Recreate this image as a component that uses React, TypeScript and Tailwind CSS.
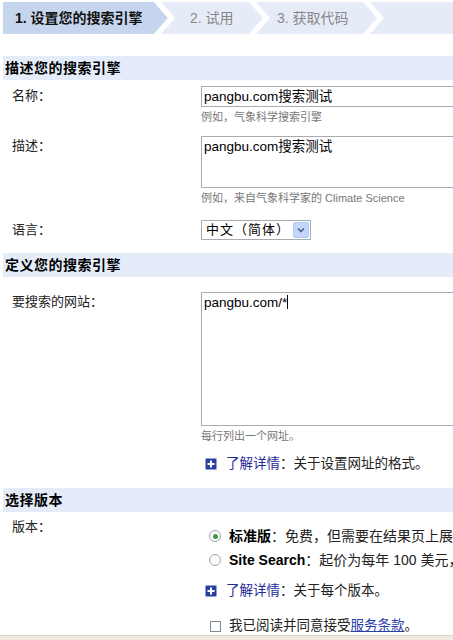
import React from 'react';

const font = { fontFamily: '"Liberation Sans", "Noto Sans CJK SC", sans-serif' };

function Chevron({ left, right }: { left: string; right: string }) {
  return (
    <svg width="26" height="32" viewBox="0 0 26 32" className="shrink-0 block">
      <rect x="0" y="0" width="26" height="32" fill={right} />
      <polygon points="0,0 4,0 18,16 4,32 0,32" fill={left} />
      <polygon points="4,0 11,0 25,16 11,32 4,32 18,16" fill="#ffffff" />
    </svg>
  );
}

function PlusIcon() {
  return (
    <svg width="12" height="12" viewBox="0 0 12 12" className="shrink-0">
      <rect x="0.5" y="0.5" width="11" height="11" rx="1" fill="#2b3f9e" stroke="#8fa2d6" />
      <rect x="2.5" y="5" width="7" height="2" fill="#ffffff" />
      <rect x="5" y="2.5" width="2" height="7" fill="#ffffff" />
    </svg>
  );
}

function Radio({ checked }: { checked?: boolean }) {
  return (
    <span className="w-[12px] h-[12px] rounded-full border border-[#9aa4ad] bg-white flex items-center justify-center shrink-0">
      {checked && <span className="w-[5px] h-[5px] rounded-full bg-[#3d9c3d]" />}
    </span>
  );
}

function SectionHeader({ title }: { title: string }) {
  return (
    <div className="ml-[3px] h-[24px] bg-[#e5ecf9] flex items-center pl-[2px]">
      <span className="text-[14px] font-bold text-black tracking-[0.5px]">{title}</span>
    </div>
  );
}

function Row({ label, labelTop = 1, children }: { label: string; labelTop?: number; children: React.ReactNode }) {
  return (
    <div className="flex">
      <div
        className={
          'w-[201px] shrink-0 pl-[12px] text-[13px] leading-[18px] text-[#222] ' +
          (labelTop === 0 ? 'pt-0' : 'pt-[1px]')
        }
      >
        {label}
      </div>
      <div className="flex-1 min-w-0">{children}</div>
    </div>
  );
}

function Hint({ text }: { text: string }) {
  return <div className="text-[11px] text-[#777] mt-[3px] leading-[14px] whitespace-nowrap">{text}</div>;
}

export default function App() {
  return (
    <div className="w-[453px] h-[640px] overflow-hidden bg-white relative flex flex-col" style={font}>
      {/* Step tabs */}
      <div className="mt-[2px] ml-[3px] h-[32px] flex bg-[#e6ecf7]">
        <div className="w-[147px] bg-[#c6d5ee] flex items-center pl-[12px] text-[14px] font-bold text-[#111]">
          1. 设置您的搜索引擎
        </div>
        <Chevron left="#c6d5ee" right="#e6ecf7" />
        <div className="w-[69px] flex items-center pl-[14px] text-[14px] text-[#888]">2. 试用</div>
        <Chevron left="#e6ecf7" right="#e6ecf7" />
        <div className="w-[88px] flex items-center pl-[6px] text-[14px] text-[#888]">3. 获取代码</div>
        <Chevron left="#e6ecf7" right="#e6ecf7" />
      </div>

      <div className="mt-[22px]">
        <SectionHeader title="描述您的搜索引擎" />
      </div>

      <div className="mt-[6px] flex flex-col">
        <Row label="名称：">
          <div className="w-[300px] h-[21px] border border-[#a5acb2] text-[13.5px] text-black px-[2px] leading-[19px]">
            pangbu.com搜索测试
          </div>
          <Hint text="例如，气象科学搜索引擎" />
        </Row>

        <div className="mt-[12px]">
          <Row label="描述：">
            <div className="w-[300px] h-[52px] border border-[#a5acb2] text-[13.5px] text-black px-[2px] leading-[19px]">
              pangbu.com搜索测试
            </div>
            <Hint text="例如，来自气象科学家的 Climate Science" />
          </Row>
        </div>

        <div className="mt-[15px]">
          <Row label="语言：">
            <div className="w-[110px] h-[20px] border border-[#a5acb2] flex items-center justify-between pl-[4px] pr-[1px]">
              <span className="text-[13px] text-black tracking-[1px]">中文（简体）</span>
              <span className="w-[16px] h-[16px] bg-[#c4d6fb] border border-[#b0c8f4] rounded-[2px] flex items-center justify-center">
                <svg width="8" height="6" viewBox="0 0 8 6">
                  <polyline points="1,1.5 4,4.5 7,1.5" fill="none" stroke="#4d6185" strokeWidth="1.6" />
                </svg>
              </span>
            </div>
          </Row>
        </div>
      </div>

      <div className="mt-[13px]">
        <SectionHeader title="定义您的搜索引擎" />
      </div>

      <div className="mt-[15px]">
        <Row label="要搜索的网站：">
          <div className="w-[300px] h-[134px] border border-[#a5acb2] text-[13.5px] text-black px-[2px] leading-[19px]">
            pangbu.com/*<span className="inline-block w-[1px] h-[14px] bg-black align-[-2px]" />
          </div>
          <Hint text="每行列出一个网址。" />
          <div className="mt-[12px] flex items-center gap-[9px] pl-[4px] text-[13.5px] leading-[18px]">
            <PlusIcon />
            <span>
              <span className="text-[#1f2a9a]">了解详情</span>
              <span className="text-[#222]">：关于设置网址的格式。</span>
            </span>
          </div>
        </Row>
      </div>

      <div className="mt-[15px]">
        <SectionHeader title="选择版本" />
      </div>

      <div className="mt-[6px]">
        <Row label="版本：" labelTop={0}>
          <div className="pl-[8px] pt-[8px] flex flex-col gap-[4px] text-[14px] leading-[20px] text-[#222] whitespace-nowrap">
            <div className="flex items-center gap-[8px]">
              <Radio checked />
              <span>
                <span className="font-bold text-black">标准版</span>：免费，但需要在结果页上展示
              </span>
            </div>
            <div className="flex items-center gap-[8px]">
              <Radio />
              <span>
                <span className="font-bold text-black">Site Search</span>：起价为每年 100 美元，
              </span>
            </div>
          </div>
          <div className="mt-[12px] flex items-center gap-[9px] pl-[4px] text-[13.5px] leading-[18px]">
            <PlusIcon />
            <span>
              <span className="text-[#1f2a9a]">了解详情</span>
              <span className="text-[#222]">：关于每个版本。</span>
            </span>
          </div>
          <div className="mt-[17px] flex items-center gap-[8px] pl-[9px] text-[13.5px] leading-[18px] text-[#222]">
            <span className="w-[11px] h-[11px] border border-[#7f8a96] bg-white shrink-0" />
            <span>
              我已阅读并同意接受<span className="text-[#2a3ea8] underline">服务条款</span>。
            </span>
          </div>
        </Row>
      </div>

      <div className="absolute left-0 right-0 bottom-0 h-[5px] border-t border-[#d8d4c4] bg-[#efebdd]" />
    </div>
  );
}
